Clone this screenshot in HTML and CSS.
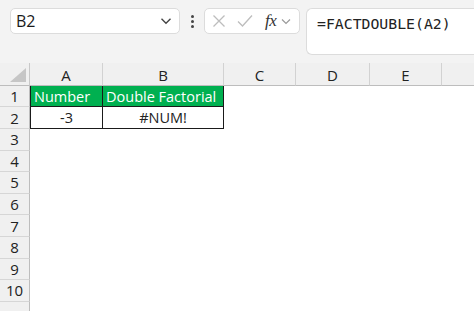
FILE: index.html
```html
<!DOCTYPE html>
<html>
<head>
<meta charset="utf-8">
<link rel="stylesheet" href="styles.css">
</head>
<body>
<div class="app">
  <div class="fbar">
    <div class="namebox">
      <span class="ref">B2</span>
      <svg class="chev" width="12" height="8" viewBox="0 0 12 8"><path d="M1.5 1.8 L6 6.2 L10.5 1.8" fill="none" stroke="#444" stroke-width="1.4"/></svg>
    </div>
    <div class="dots"><i></i><i></i><i></i></div>
    <div class="fxbox">
      <svg class="ico" width="14" height="14" viewBox="0 0 14 14"><path d="M1.5 1.5 L12.5 12.5 M12.5 1.5 L1.5 12.5" stroke="#bdbdbd" stroke-width="1.3" fill="none"/></svg>
      <svg class="ico chk" width="16" height="14" viewBox="0 0 16 14"><path d="M1 7.5 L5.5 12 L15 1.5" stroke="#bdbdbd" stroke-width="1.3" fill="none"/></svg>
      <span class="fx">fx</span>
      <svg class="chev2" width="10" height="7" viewBox="0 0 10 7"><path d="M1 1.5 L5 5.5 L9 1.5" fill="none" stroke="#9a9a9a" stroke-width="1.2"/></svg>
    </div>
    <div class="formula">=FACTDOUBLE(A2)</div>
  </div>
  <div class="sheet">
    <div class="corner"><svg width="16" height="14" viewBox="0 0 16 14"><path d="M16 0 L16 14 L0 14 Z" fill="#c6c6c6"/></svg></div>
    <div class="ch">A</div>
    <div class="ch">B</div>
    <div class="ch">C</div>
    <div class="ch">D</div>
    <div class="ch">E</div>
    <div class="ch last"></div>

    <div class="rh">1</div>
    <div class="c hdr t l">Number</div>
    <div class="c hdr t">Double Factorial</div>
    <div class="c"></div><div class="c"></div><div class="c"></div><div class="c"></div>

    <div class="rh">2</div>
    <div class="c val l">-3</div>
    <div class="c val">#NUM!</div>
    <div class="c"></div><div class="c"></div><div class="c"></div><div class="c"></div>

    <div class="rh">3</div><div class="c"></div><div class="c"></div><div class="c"></div><div class="c"></div><div class="c"></div><div class="c"></div>
    <div class="rh">4</div><div class="c"></div><div class="c"></div><div class="c"></div><div class="c"></div><div class="c"></div><div class="c"></div>
    <div class="rh">5</div><div class="c"></div><div class="c"></div><div class="c"></div><div class="c"></div><div class="c"></div><div class="c"></div>
    <div class="rh">6</div><div class="c"></div><div class="c"></div><div class="c"></div><div class="c"></div><div class="c"></div><div class="c"></div>
    <div class="rh">7</div><div class="c"></div><div class="c"></div><div class="c"></div><div class="c"></div><div class="c"></div><div class="c"></div>
    <div class="rh">8</div><div class="c"></div><div class="c"></div><div class="c"></div><div class="c"></div><div class="c"></div><div class="c"></div>
    <div class="rh">9</div><div class="c"></div><div class="c"></div><div class="c"></div><div class="c"></div><div class="c"></div><div class="c"></div>
    <div class="rh">10</div><div class="c"></div><div class="c"></div><div class="c"></div><div class="c"></div><div class="c"></div><div class="c"></div>
    <div class="rh"></div><div class="c"></div><div class="c"></div><div class="c"></div><div class="c"></div><div class="c"></div><div class="c"></div>
  </div>
</div>
</body>
</html>
```
FILE: styles.css
```css
* { box-sizing: border-box; }
html, body { margin: 0; padding: 0; }
body {
  width: 474px;
  height: 311px;
  overflow: hidden;
  background: #f3f3f3;
  font-family: "Open Sans", "Liberation Sans", sans-serif;
  color: #222;
}
.app { display: flex; flex-direction: column; }
.fbar {
  display: flex;
  align-items: flex-start;
  padding: 8px 0 0 10px;
  height: 63px;
}
.namebox {
  width: 170px;
  height: 26px;
  background: #fff;
  border: 1px solid #dcdcdc;
  border-radius: 5px;
  display: flex;
  align-items: center;
  justify-content: space-between;
  padding: 0 7px 0 5px;
}
.ref { font-size: 16px; color: #1a1a1a; }
.dots {
  width: 24px;
  height: 26px;
  display: flex;
  flex-direction: column;
  align-items: center;
  justify-content: center;
  gap: 2px;
}
.dots i { display: block; width: 3px; height: 3px; border-radius: 50%; background: #444; }
.fxbox {
  width: 96px;
  height: 26px;
  background: #fff;
  border: 1px solid #dcdcdc;
  border-radius: 5px;
  display: flex;
  align-items: center;
  padding-left: 7px;
}
.ico { flex: none; }
.chk { margin-left: 11px; }
.fx {
  font-family: "Liberation Serif", "DejaVu Serif", serif;
  font-style: italic;
  font-size: 17px;
  color: #333;
  margin-left: 12px;
  letter-spacing: -0.5px;
}
.chev2 { margin-left: 5px; }
.formula {
  margin-left: 6px;
  flex: 1;
  height: 47px;
  background: #fff;
  border: 1px solid #dcdcdc;
  border-right: none;
  border-radius: 6px 0 0 6px;
  font-family: "DejaVu Sans Mono", "Liberation Mono", monospace;
  font-size: 14.8px;
  color: #222;
  padding: 5px 0 0 10px;
  line-height: 20px;
}
.sheet {
  display: grid;
  grid-template-columns: 30px 73px 121px 72px 74px 72px 1fr;
  grid-template-rows: 23px 21px 22px repeat(9, 21.6px);
  background: #fff;
  font-size: 14.5px;
}
.corner {
  background: #f0f0f0;
  border-right: 1px solid #c8c8c8;
  border-bottom: 1px solid #bdbdbd;
  display: flex;
  align-items: flex-end;
  justify-content: flex-end;
  padding: 0 3px 3px 0;
}
.ch {
  background: #f0f0f0;
  border-right: 1px solid #d2d2d2;
  border-bottom: 1px solid #bdbdbd;
  display: flex;
  align-items: center;
  justify-content: center;
  color: #222;
  font-size: 15px;
  padding-top: 1px;
}
.ch.last { border-right: none; }
.rh {
  background: #f0f0f0;
  border-right: 1px solid #bdbdbd;
  border-bottom: 1px solid #d6d6d6;
  display: flex;
  align-items: center;
  justify-content: center;
  color: #222;
  font-size: 15px;
}
.c { background: #fff; }
.hdr {
  background: #00b050;
  color: #fff;
  border-right: 1px solid #1a1a1a;
  border-bottom: 1px solid #1a1a1a;
  display: flex;
  align-items: center;
  padding-left: 3px;
  white-space: nowrap;
}
.val {
  border-right: 1px solid #1a1a1a;
  border-bottom: 1px solid #1a1a1a;
  display: flex;
  align-items: center;
  justify-content: center;
}
.l { border-left: 1px solid #1a1a1a; }
```
